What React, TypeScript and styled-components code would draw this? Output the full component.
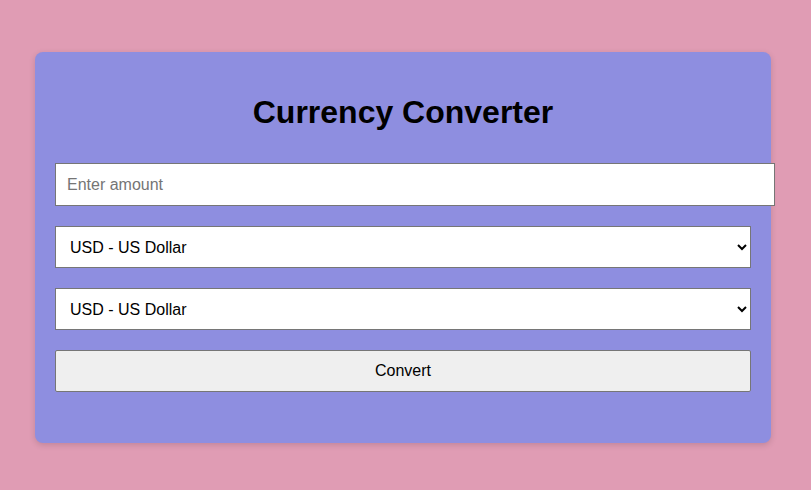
import React from "react";
import styled, { createGlobalStyle } from "styled-components";

const GlobalStyle = createGlobalStyle`
  html, body {
    margin: 0;
    padding: 0;
    background: #e09cb4;
    font-family: "Liberation Sans", Arial, sans-serif;
  }
`;

const Page = styled.div`
  min-height: 490px;
  padding: 52px 0 0 35px;
  box-sizing: border-box;
`;

const Card = styled.div`
  width: 736px;
  box-sizing: border-box;
  padding: 20px 20px 51px;
  background: #8e8ee0;
  border-radius: 8px;
  box-shadow: 0 2px 6px rgba(0, 0, 0, 0.15);
  display: flex;
  flex-direction: column;
  gap: 20px;
`;

const Title = styled.h1`
  margin: 22px 0 12px;
  font-size: 32px;
  font-weight: bold;
  text-align: center;
  color: #000;
`;

const AmountInput = styled.input`
  width: calc(100% + 24px);
  height: 43px;
  box-sizing: border-box;
  padding: 0 11px;
  border: 1px solid #767676;
  background: #fff;
  font-family: "Liberation Sans", Arial, sans-serif;
  font-size: 16px;
  color: #000;
  outline: none;
  &::placeholder {
    color: #757575;
  }
`;

const CurrencySelect = styled.select`
  width: 100%;
  height: 42px;
  box-sizing: border-box;
  padding: 0 10px;
  border: 1px solid #767676;
  border-radius: 0;
  background: #fff;
  font-family: "Liberation Sans", Arial, sans-serif;
  font-size: 16px;
  color: #000;
`;

const ConvertButton = styled.button`
  width: 100%;
  height: 42px;
  box-sizing: border-box;
  border: 1px solid #767676;
  border-radius: 2px;
  background: #efefef;
  font-family: "Liberation Sans", Arial, sans-serif;
  font-size: 16px;
  color: #000;
`;

export default function App() {
  return (
    <>
      <GlobalStyle />
      <Page>
        <Card>
          <Title>Currency Converter</Title>
          <AmountInput type="number" placeholder="Enter amount" />
          <CurrencySelect defaultValue="USD">
            <option value="USD">USD - US Dollar</option>
            <option value="EUR">EUR - Euro</option>
          </CurrencySelect>
          <CurrencySelect defaultValue="USD">
            <option value="USD">USD - US Dollar</option>
            <option value="EUR">EUR - Euro</option>
          </CurrencySelect>
          <ConvertButton>Convert</ConvertButton>
        </Card>
      </Page>
    </>
  );
}
